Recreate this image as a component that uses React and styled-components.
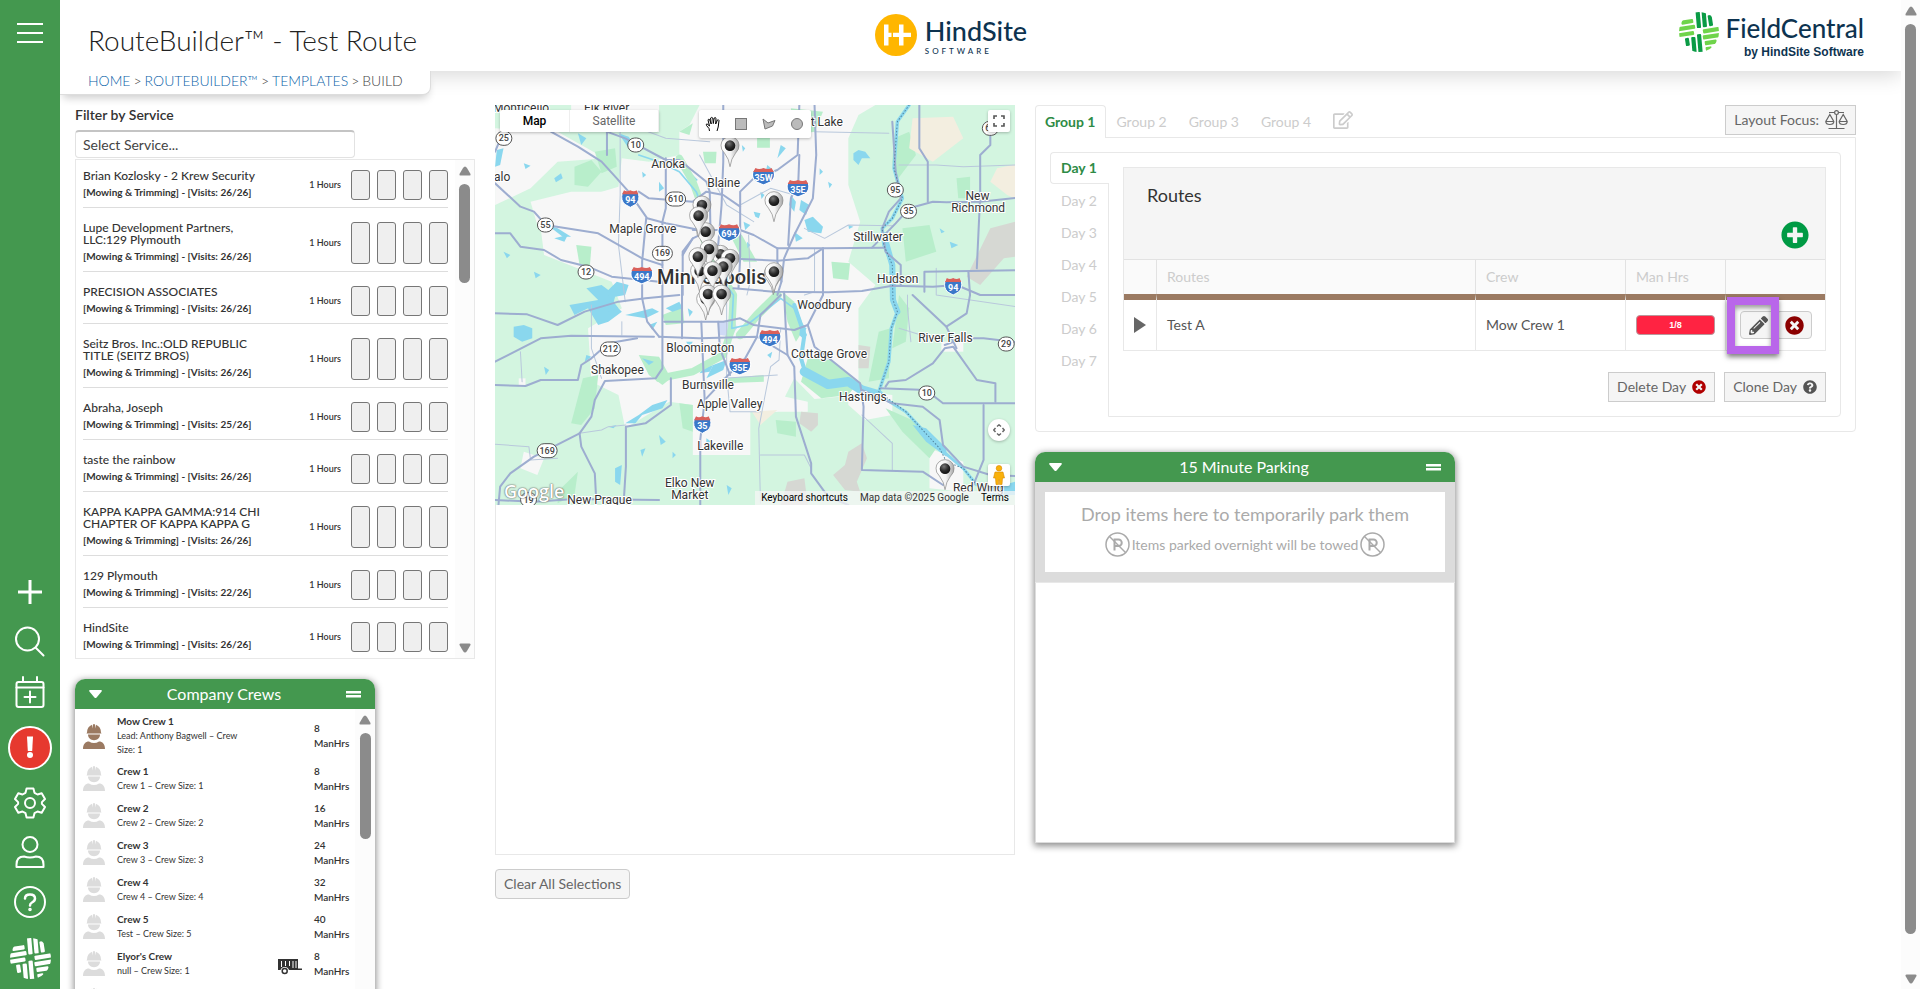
import React from "react";
import styled, { createGlobalStyle, css } from "styled-components";
import {
  FaPencilAlt,
  FaTimesCircle,
  FaQuestionCircle,
  FaPlusCircle,
  FaRegEdit,
} from "react-icons/fa";

const GREEN = "#44984f";
const BROWN = "#9b7a62";
const LINE = "#e8e8e8";

const GlobalStyle = createGlobalStyle`
  * { box-sizing: border-box; }
  body {
    margin: 0;
    background: #fff;
    color: #333;
    font: 400 14px/20px Lato, "Open Sans", sans-serif;
  }
  button, input { font: inherit; color: inherit; }
  button { cursor: pointer; }
  h1, h2, p, ul { margin: 0; padding: 0; font-weight: inherit; }
  ul { list-style: none; }
  svg { display: block; }
`;

/* ---------- page frame ---------- */

const Page = styled.div`
  display: flex;
  height: 100vh;
  overflow: hidden;
`;

const Sidebar = styled.nav`
  display: flex;
  flex-direction: column;
  flex: none;
  width: 60px;
  background: ${GREEN};
  color: #fff;
`;

const SideButton = styled.button`
  display: grid;
  place-items: center;
  flex: none;
  width: 60px;
  height: ${(p) => p.$height || 50}px;
  padding: 0;
  border: 0;
  background: none;
  ${(p) => p.$pushDown && css`margin-top: auto;`}
`;

const Main = styled.main`
  flex: 1;
  min-width: 0;
  overflow: hidden;
`;

const ScrollTrack = styled.div`
  display: flex;
  flex-direction: column;
  align-items: center;
  flex: none;
  width: ${(p) => p.$width}px;
  padding: 6px 0 5px;
  background: #fcfcfc;
`;

const ScrollThumb = styled.div`
  width: 11px;
  margin: 8px 0;
  border-radius: 6px;
  background: #8b8b8b;
  ${(p) => (p.$length ? css`height: ${p.$length}px;` : css`flex: 1; margin-bottom: 40px;`)}
`;

const ScrollArrow = styled.svg`
  flex: none;
  width: 12px;
  height: 10px;
  fill: #8b8b8b;
  ${(p) => p.$down && css`margin-top: auto; transform: rotate(180deg);`}
`;

function ScrollBar({ width = 19, length }) {
  return (
    <ScrollTrack $width={width} aria-hidden="true">
      <ScrollArrow viewBox="0 0 12 10"><path d="M6 0.5Q7 .5 8 2L11.5 8Q12 9.500 10.500 9.500H1.500Q0 9.500 .5 8L4 2Q5 .5 6 .5Z" /></ScrollArrow>
      <ScrollThumb $length={length} />
      <ScrollArrow $down viewBox="0 0 12 10"><path d="M6 0.5Q7 .5 8 2L11.5 8Q12 9.500 10.500 9.500H1.500Q0 9.500 .5 8L4 2Q5 .5 6 .5Z" /></ScrollArrow>
    </ScrollTrack>
  );
}

/* ---------- header ---------- */

const Header = styled.header`
  display: grid;
  grid-template-columns: 1fr auto 1fr;
  height: 71px;
  padding: 0 37px 0 28px;
  box-shadow: 0 4px 20px rgba(0, 0, 0, 0.16);
`;

const Title = styled.h1`
  padding-top: 23px;
  font-size: 28px;
  font-weight: 300;
  line-height: 34px;
  color: #222;
  white-space: nowrap;
`;

const HindSiteLogo = styled.div`
  display: flex;
  gap: 8px;
  margin: 14px 50px 0 0;
  color: #0d3350;
`;

const WordMark = styled.div`
  display: flex;
  flex-direction: column;
  font-size: ${(p) => p.$size}px;
  font-weight: 500;
  line-height: ${(p) => p.$line}px;
`;

const LogoSmall = styled.span`
  font-size: 8px;
  font-weight: 500;
  letter-spacing: 3px;
  line-height: 8px;
`;

const FieldLogo = styled.div`
  display: flex;
  justify-content: flex-end;
  gap: 7px;
  padding-top: 12px;
  color: #0d3350;
`;

const ByLine = styled.span`
  font: 700 12px/14px "Liberation Sans", Arial, sans-serif;
  text-align: right;
`;

const Crumbs = styled.nav`
  position: relative;
  display: flex;
  gap: 3px;
  width: 371px;
  max-width: 100%;
  height: 24px;
  padding-left: 28px;
  border: solid #ddd;
  border-width: 0 1px 1px 0;
  border-radius: 0 0 8px 0;
  background: #fff;
  box-shadow: 0 6px 8px -3px rgba(0, 0, 0, 0.2);
  color: #444;
  font-weight: 300;
  white-space: nowrap;
`;

const CrumbLink = styled.a`
  color: #0a5fa8;
  text-decoration: none;
`;

const Content = styled.div`
  display: grid;
  grid-template-columns: minmax(0, 400fr) minmax(0, 520fr) minmax(0, 821fr);
  gap: 20px;
  align-items: start;
  padding: 10px 45px 0 15px;
`;

/* ---------- service list ---------- */

const FilterLabel = styled.label`
  display: block;
  height: 25px;
  font-weight: 600;
`;

const FilterInput = styled.input`
  display: block;
  width: 70%;
  height: 28px;
  padding: 0 7px;
  border: 1px solid #e2e2e2;
  border-top: 2px solid #c4c4c4;
  border-radius: 4px;
  outline: 0;
  &::placeholder { color: #444; opacity: 1; }
`;

const ListPanel = styled.section`
  display: flex;
  height: 500px;
  margin-top: 1px;
  border: 1px solid ${LINE};
  overflow: hidden;
`;

const ServiceRows = styled.ul`
  flex: 1;
  min-width: 0;
  padding: 0 7px;
`;

const ServiceRow = styled.li`
  display: flex;
  align-items: stretch;
  padding: 14px 0 7px;
  border-bottom: 1px solid #ddd;
  &:first-child { padding-top: 10px; }
  &:last-child { border-bottom: 0; }
`;

const ServiceText = styled.div`
  flex: 1;
  min-width: 0;
`;

const ServiceName = styled.p`
  max-width: 185px;
  font-size: 12px;
  font-weight: 500;
  line-height: 12px;
`;

const ServiceDetail = styled.p`
  margin-top: 3px;
  font-size: 10px;
  font-weight: 700;
  line-height: 15px;
`;

const Hours = styled.span`
  align-self: center;
  margin-right: 10px;
  font-size: 9px;
  font-weight: 600;
`;

const WeekBoxes = styled.div`
  display: flex;
  gap: 7px;
`;

const WeekBox = styled.button`
  width: 19px;
  padding: 0;
  border: 1px solid #767676;
  border-radius: 3px;
  background: #efefef;
`;

const SERVICES = [
  ["Brian Kozlosky - 2 Krew Security", "26/26"],
  ["Lupe Development Partners, LLC:129 Plymouth", "26/26"],
  ["PRECISION ASSOCIATES", "26/26"],
  ["Seitz Bros. Inc.:OLD REPUBLIC TITLE (SEITZ BROS)", "26/26"],
  ["Abraha, Joseph", "25/26"],
  ["taste the rainbow", "26/26"],
  ["KAPPA KAPPA GAMMA:914 CHI CHAPTER OF KAPPA KAPPA G", "26/26"],
  ["129 Plymouth", "22/26"],
  ["HindSite", "26/26"],
];

/* ---------- floating panels ---------- */

const FloatPanel = styled.section`
  width: ${(p) => p.$width};
  margin-top: ${(p) => p.$top}px;
  border-radius: 10px 10px 0 0;
  background: #fff;
  box-shadow: 0 2px 7px 1px rgba(0, 0, 0, 0.45);
`;

const FloatHead = styled.header`
  display: flex;
  align-items: center;
  justify-content: space-between;
  height: 30px;
  padding: 0 14px;
  border-radius: 10px 10px 0 0;
  background: ${GREEN};
  color: #fff;
`;

const FloatTitle = styled.h2`
  font-size: 16px;
`;

const HeadButton = styled.button`
  padding: 0;
  border: 0;
  background: none;
`;

function PanelHead({ title }) {
  return (
    <FloatHead>
      <HeadButton aria-label={`Collapse ${title}`}>
        <svg width="13" height="9" viewBox="0 0 13 9" fill="#fff"><path d="M1 0H12Q13.500 .5 12.400 1.800L7.400 7.700Q6.500 8.500 5.600 7.700L.6 1.800Q-.5 .5 1 0Z" /></svg>
      </HeadButton>
      <FloatTitle>{title}</FloatTitle>
      <HeadButton aria-label={`Move ${title}`}>
        <svg width="15" height="7" viewBox="0 0 15 7" fill="#fff"><path d="M0 0H15V2.600H0ZM0 4H15V6.600H0Z" /></svg>
      </HeadButton>
    </FloatHead>
  );
}

const CrewBody = styled.div`
  display: flex;
  height: 340px;
`;

const CrewRows = styled.ul`
  flex: 1;
  min-width: 0;
  padding: 5px 0 0 8px;
`;

const CrewRow = styled.li`
  display: flex;
  min-height: 37px;
  padding-bottom: 7px;
  line-height: 15px;
`;

const CrewIconCell = styled.div`
  width: 34px;
  padding-top: 2px;
  flex: none;
  align-self: ${(p) => (p.$middle ? "center" : "start")};
`;

const CrewText = styled.div`
  width: 134px;
  font-size: 9px;
  line-height: 14px;
`;

const CrewName = styled.p`
  font-size: 10px;
  font-weight: 700;
  line-height: 15px;
`;

const CrewExtra = styled.div`
  display: flex;
  flex: 1;
  align-items: center;
  justify-content: flex-end;
  padding: 6px 12px 0 0;
`;

const CrewHours = styled.p`
  align-self: center;
  width: 41px;
  font-size: 10px;
  font-weight: 600;
`;

const CREWS = [
  ["Mow Crew 1", "Lead: Anthony Bagwell – Crew Size: 1", 8],
  ["Crew 1", "Crew 1 – Crew Size: 1", 8],
  ["Crew 2", "Crew 2 – Crew Size: 2", 16],
  ["Crew 3", "Crew 3 – Crew Size: 3", 24],
  ["Crew 4", "Crew 4 – Crew Size: 4", 32],
  ["Crew 5", "Test – Crew Size: 5", 40],
  ["Elyor's Crew", "null – Crew Size: 1", 8],
];

function WorkerIcon({ color = "#dcdcdc" }) {
  return (
    <svg width="22" height="25" viewBox="0 0 22 25" fill={color}>
      <path d="M4 8.500C4 4.500 6 2 9 .8L9.600 4.500L10 .3Q11 0 12 .3L12.400 4.500L13 .8C16 2 18 4.500 18 8.500L18.500 9.500H3.500Z" />
      <path d="M5 10.600H17C17 14 14.500 16.200 11 16.200S5 14 5 10.600Z" />
      <path d="M0 25C0 20 2.500 17.500 6 17.500Q11 20.500 16 17.500C19.500 17.500 22 20 22 25Z" />
    </svg>
  );
}

function TrailerIcon() {
  return (
    <svg width="24" height="16" viewBox="0 0 24 16" fill="#333">
      <path d="M0 0H20V9.500H24V11H11A4.500 4.500 0 0 0 2.500 11H0ZM3 2V8H4V2ZM7 2V7H8V2ZM11 2V7H12V2ZM14.500 2V9H15.500V2ZM17.500 2V9H18.500V2Z" fillRule="evenodd" />
      <circle cx="6.700" cy="12" r="2.500" fill="#fff" stroke="#333" strokeWidth="1.500" />
    </svg>
  );
}

/* ---------- map ---------- */

const MapFrame = styled.section`
  border: 1px solid ${LINE};
  border-top: 0;
  height: 750px;
  margin-bottom: 14px;
`;

const MapBox = styled.div`
  position: relative;
  margin: 0 -1px;
  overflow: hidden;
  font-family: Roboto, sans-serif;
`;

const MapDrawing = styled.svg`
  width: 100%;
  height: 400px;
  background: #d3f5e0;
`;

const overlay = css`
  position: absolute;
  display: flex;
  background: #fff;
  border-radius: 2px;
  box-shadow: 0 1px 3px rgba(0, 0, 0, 0.25);
`;

const MapTypes = styled.div`
  ${overlay}
  top: 5px;
  left: 5px;
`;

const MapType = styled.button`
  width: ${(p) => p.$width}px;
  height: 22px;
  padding: 0;
  border: 0;
  border-right: 1px solid #eee;
  background: none;
  color: ${(p) => (p.$active ? "#000" : "#666")};
  font-size: 12px;
  font-weight: ${(p) => (p.$active ? 500 : 400)};
`;

const DrawTools = styled.div`
  ${overlay}
  top: 5px;
  left: 204px;
`;

const MapButton = styled.button`
  display: grid;
  place-items: center;
  width: ${(p) => p.$size || 22}px;
  height: ${(p) => p.$size || 22}px;
  padding: 0;
  border: 0;
  background: none;
`;

const CornerTool = styled.div`
  ${overlay}
  top: ${(p) => p.$top}px;
  right: 5px;
  border-radius: ${(p) => (p.$round ? "50%" : "2px")};
`;

const MapCredits = styled.div`
  position: absolute;
  right: 0;
  bottom: 0;
  display: flex;
  gap: 12px;
  height: 14px;
  padding: 0 6px;
  background: rgba(245, 245, 245, 0.75);
  font-size: 10px;
  line-height: 14px;
`;

const CreditLink = styled.a`
  color: #000;
  text-decoration: none;
`;

const GoogleMark = styled.span`
  position: absolute;
  left: 9px;
  bottom: 3px;
  color: #fff;
  font: 600 18px/22px "Open Sans", sans-serif;
  text-shadow: 0 0 2px #666, 0 0 1px #555;
`;

const HIGHWAYS = [
  "180,110 260,155 330,200 375,250 410,290 465,370 520,385 620,405",
  "345,110 400,130 520,195 560,195 640,260 650,290 652,400",
  "440,290 470,310 600,320 640,290 690,300 740,335",
  "735,580 740,490 740,290 780,250 850,225 910,180 915,30",
  "915,180 912,260 890,310 882,450",
  "600,405 740,405 780,420 850,460 985,460 1165,458",
  "960,30 965,180 955,310 900,420 870,490 862,560 850,600",
  "690,30 690,200 685,330 675,450 672,560",
  "346,30 346,180",
  "520,190 520,340 510,380 510,820 490,850 340,858 310,915 300,965 265,1015 130,1085 60,1135 30,1175 25,1230",
  "462,370 450,500 450,610 465,680 500,725",
  "500,725 620,730 790,725 880,780",
  "515,680 690,680 740,670 780,690 900,705 940,690 985,600 985,460",
  "625,680 635,915 622,1035 622,1230",
  "860,600 800,660 790,725 755,790 705,840 640,910",
  "720,580 840,590 1000,592 1100,588 1190,572 1310,575 1380,570 1450,600 1590,600",
  "15,265 90,335 130,350 165,390 320,415 450,490 510,510",
  "15,415 60,415 90,455 160,465 210,495 290,515 360,545 500,560",
  "15,800 150,730 240,722 485,725",
  "15,870 105,873 150,855 260,855 270,810 300,790 350,745 435,730",
  "15,655 110,658 200,690 280,650 380,620 460,610 560,600",
  "265,1015 270,1055 310,1135 315,1230",
  "535,850 535,930 460,985 402,995 402,1115 395,1230",
  "870,590 875,700 880,780 900,815 905,965 950,1105 950,1135 1000,1205 1060,1230",
  "940,690 960,755 1095,865 1105,935 1100,1125 1280,1130 1340,1170",
  "1100,885 1190,925 1280,935 1330,975 1340,1050 1400,1115 1480,1140 1590,1145",
  "1155,880 1290,885 1340,925 1590,925",
  "1460,930 1460,1095 1430,1170",
  "1170,875 1180,860 1230,855 1310,805 1345,760 1370,755 1440,855 1495,865 1495,920",
  "1250,600 1350,695 1380,760",
  "1350,695 1410,655 1420,600 1415,530",
  "1345,750 1400,730 1460,730 1590,745",
  "1270,30 1270,160 1295,200 1295,320",
  "1130,458 1200,385 1240,340 1310,320 1350,322 1450,320 1590,305",
  "1480,60 1480,150 1450,180 1450,300 1440,520",
  "1190,80 1200,230 1215,310 1180,350 1160,400 1170,470 1215,510 1215,572",
  "568,560 568,730",
  "570,480 600,430 650,405 740,405",
  "570,600 570,470 600,430",
  "740,492 850,497 940,490 985,460",
  "850,460 850,500 862,560",
  "675,680 680,760 710,840",
  "15,170 40,110 90,30",
  "1285,590 1285,530 1590,525",
  "15,1215 130,1220 250,1212 500,1215",
];

const LOCAL_ROADS = [
  "385,70 385,300 380,450 400,620", "440,100 520,130 650,140", "960,110 1180,115",
  "15,1048 115,1055 120,1095 200,1090", "300,630 300,760 330,850", "265,1015 330,1005 350,995 402,990",
  "800,1225 795,1000 830,815 855,795 860,700", "800,1080 930,1080 950,1120", "700,540 700,840 710,950 800,950",
  "960,460 960,590 930,600", "930,400 990,430 1060,390 1190,392", "1210,210 1320,210 1400,215 1553,210",
  "1235,600 1235,640 1245,740", "1100,960 1190,1045 1190,1125", "765,420 770,560 760,600",
  "1320,520 1320,600 1590,640", "1210,700 1340,740", "95,860 90,770", "620,180 700,330 780,380",
  "390,680 390,720", "740,330 830,280 900,300", "690,850 850,840",
];

const URBAN = [
  "620,30 1140,30 1090,60 1060,130 1060,270 1095,380 1060,500 1140,570 1090,640 1090,900 960,912 900,850 850,950 770,950 770,1080 600,1080 600,930 530,920 400,1000 380,900 300,860 290,700 390,640 360,560 160,480 150,400 200,330 380,275 390,190 470,200 560,180 560,110 590,90",
  "15,100 200,110 340,190 200,200 120,280 15,330",
  "240,30 500,30 500,70 350,100 240,90", "1060,885 1190,900 1190,960 1110,975 1060,930",
  "1300,1060 1400,1100 1400,1190 1300,1180", "100,1070 160,1090 140,1140 90,1120", "85,850 105,850 105,875 85,875",
  "1335,740 1400,740 1400,770 1335,770", "120,320 240,290 370,290 300,400 140,390", "830,950 940,950 940,920 850,900",
];

const FOREST = [
  "250,215 300,195 330,230 290,275 250,270", "310,170 370,160 375,215 330,235", "630,170 670,170 668,205 635,205",
  "790,120 828,125 828,158 790,158", "560,110 600,85 590,120", "890,40 985,50 960,110 900,120", "700,400 745,420 790,500 750,500",
  "255,450 300,455 295,520 265,510", "510,660 570,635 575,685 520,690", "275,850 320,840 310,940 270,990 240,985",
  "440,780 500,785 535,850 510,870 470,840", "560,925 600,930 600,1010 570,1000", "845,975 905,980 905,1025 850,1015",
  "1010,500 1065,505 1060,555 1015,550", "1195,130 1240,110 1260,180 1200,260 1190,200", "1220,400 1300,390 1320,470 1230,500",
  "1210,600 1240,640 1230,740 1190,760", "1170,940 1260,980 1320,1060 1300,1090 1220,1010", "940,790 1010,795 1090,860 1060,900 980,910 920,860",
  "1150,710 1185,700 1180,850 1120,860", "1380,250 1420,245 1420,310 1385,310", "690,850 810,840 810,860 690,865", "200,1190 260,1130 250,1200 200,1225",
  "865,590 900,620 930,700 905,740 880,680",
];

const SAND = ["1250,70 1370,65 1400,130 1310,200 1240,160", "1500,220 1590,200 1590,330 1530,300 1480,260", "775,950 850,945 800,990"];
const ROCK = ["1480,400 1590,370 1590,480 1520,490 1450,570 1410,545", "1090,750 1125,755 1120,820 1090,820", "920,950 970,955 970,990 950,1010 915,985", "1060,1070 1100,1045 1115,1090 1085,1160 1095,1190 1050,1185 1015,1140 1050,1110", "880,1160 930,1150 940,1230 860,1230"];

const LAKES = [
  "285,580 330,570 350,585 375,560 410,570 400,600 370,605 365,625 390,650 350,680 320,690 290,640 250,660 235,630 320,615",
  "70,695 100,690 125,700 125,730 95,740 70,725", "930,375 955,365 985,395 980,415 940,410", "1075,175 1090,165 1110,170 1125,190 1100,190 1090,210 1075,195",
  "920,680 935,700 930,735 915,720", "170,390 200,400 240,425 215,425", "380,115 410,125 440,165 410,160", "20,165 40,160 30,210 15,215",
  "80,85 100,100 75,110", "260,115 285,130 270,150", "860,150 875,160 850,190", "890,300 905,320 900,350 885,330", "920,315 945,330 935,360 915,345",
  "780,350 800,355 795,370 785,365", "820,210 845,230 830,250 815,235", "750,380 770,390 755,405", "900,410 925,430 905,440",
  "480,930 525,915 510,940 450,960 430,985 400,985 440,960", "370,1120 390,1110 385,1170 370,1160", "630,820 660,810 650,830 620,835", "660,810 700,795 690,825 640,850",
  "400,660 440,650 480,640 500,650 460,670", "470,690 495,680 480,705", "350,600 380,640 350,650", "450,790 485,800 470,810", "285,780 300,785 280,800",
  "1250,990 1290,1000 1350,1060 1350,1085 1290,1040", "1450,1170 1500,1175 1590,1150 1590,1200 1480,1200", "1330,400 1345,410 1335,415", "1060,390 1075,395 1062,402",
  "160,815 175,825 165,840", "500,1020 520,1040 505,1050", "445,1065 460,1060 450,1085", "375,990 365,1000 350,995", "540,1070 550,1080 540,1090",
  "820,780 835,770 830,790", "580,740 600,740 590,755", "640,1030 655,1040 640,1045", "700,1170 715,1180 705,1200", "190,430 230,420 220,440",
  "520,640 560,620 570,640 540,650", "700,470 715,480 705,490", "585,640 600,650 590,665", "975,220 985,230 975,240", "760,440 770,450 762,460",
  "1360,440 1385,450 1365,460", "130,530 150,540 135,550", "40,470 60,480 50,490", "1000,80 1020,85 1015,95", "745,150 755,160 748,170",
  "190,250 210,235 215,250 195,262", "500,260 515,280 500,290", "100,205 120,212 105,222", "600,240 615,255 602,262", "800,290 812,300 803,312", "1000,260 1012,268 1004,280", "450,230 462,240 452,248",
];

const LABELS = [
  ["Monticello", 92, 50], ["Elk River", 345, 52], ["Anoka", 527, 220], ["Blaine", 691, 277], ["alo", 36, 259], ["Maple Grove", 452, 415],
  ["Forest Lake", 952, 94], ["New", 1442, 315], ["Richmond", 1444, 351], ["Stillwater", 1148, 438], ["Hudson", 1206, 564],
  ["Woodbury", 989, 642], ["River Falls", 1347, 741], ["Bloomington", 622, 772], ["Cottage Grove", 1003, 789], ["Shakopee", 377, 838],
  ["Burnsville", 645, 882], ["Apple Valley", 709, 939], ["Hastings", 1103, 919], ["Lakeville", 681, 1065], ["Elko New", 591, 1176],
  ["Market", 591, 1212], ["New Prague", 324, 1227], ["Red Wing", 1444, 1191],
];

const INTERSTATES = [["94", 415, 310], ["35W", 809, 243], ["35E", 911, 279], ["694", 707, 412], ["494", 449, 540], ["94", 1370, 573], ["494", 828, 729], ["35E", 739, 813], ["35", 628, 988]];
const ROUTES = [["25", 41, 130], ["10", 431, 150], ["610", 549, 312], ["55", 164, 390], ["169", 510, 475], ["12", 284, 531], ["95", 1199, 285], ["35", 1238, 349], ["65", 1480, 100], ["212", 356, 762], ["29", 1527, 747], ["10", 1292, 894], ["169", 169, 1067], ["19", 114, 1214]];
const PINS = [[710, 152], [840, 317], [627, 330], [638, 410], [617, 362], [682, 478], [648, 462], [710, 490], [620, 528], [615, 485], [690, 515], [658, 527], [838, 536], [840, 530], [638, 612], [645, 597], [685, 597], [1346, 1121]];

const mx = (x) => x / 2.958 - 5;
const my = (y) => y / 3 - 10;

function Interstate({ n, x, y }) {
  return (
    <g transform={`translate(${mx(x)} ${my(y)})`}>
      <path d="M-7-7Q-4-5 0-7Q4-5 7-7L9-5Q11 2 6 6Q2 8 0 9Q-2 8-6 6Q-11 2-9-5Z" transform={n.length > 2 ? "scale(1.15 1)" : "scale(.9 1)"} fill="#3b78c9" stroke="#fff" strokeWidth="1" />
      <path d="M-7-8Q-4-6 0-8Q4-6 7-8L9-4H-9Z" transform={n.length > 2 ? "scale(1.15 1)" : "scale(.9 1)"} fill="#d9605b" />
      <text y="5" textAnchor="middle" fontSize="9" fontWeight="700" fill="#fff">{n}</text>
    </g>
  );
}

function RouteShield({ n, x, y }) {
  const w = n.length > 2 ? 20 : 16;
  return (
    <g transform={`translate(${mx(x)} ${my(y)})`}>
      <rect x={-w / 2} y="-7" width={w} height="14" rx="7" fill="#fff" stroke="#555" strokeWidth="1" />
      <text y="3" textAnchor="middle" fontSize="9" fontWeight="500" fill="#444">{n}</text>
    </g>
  );
}

function Pin({ x, y }) {
  return (
    <g transform={`translate(${mx(x)} ${my(y)})`}>
      <path d="M0 21Q-1 13-5.500 7.500Q-9.500 3.500-9-.5A9 8.500 0 0 1 9-.5Q9.500 3.500 5.500 7.500Q1 13 0 21Z" fill="url(#pinBody)" stroke="#888" strokeWidth=".7" />
      <circle r="5.300" fill="url(#pinBall)" />
    </g>
  );
}

function RegionMap() {
  return (
    <MapDrawing viewBox="0 0 520 400" preserveAspectRatio="xMidYMid slice" role="img" aria-label="Map of customer sites around Minneapolis">
      <defs>
        <linearGradient id="pinBody"><stop offset="0" stopColor="#fff" /><stop offset=".55" stopColor="#f4f4f4" /><stop offset="1" stopColor="#a5a5a5" /></linearGradient>
        <radialGradient id="pinBall" cx=".4" cy=".3" r=".7"><stop offset="0" stopColor="#777" /><stop offset=".6" stopColor="#2a2a2a" /><stop offset="1" stopColor="#111" /></radialGradient>
      </defs>
      <g transform="translate(-5 -10) scale(.33806 .33333)" strokeLinejoin="round" strokeLinecap="round">
        {URBAN.map((p) => <polygon key={p} points={p} fill="#f7f7f7" />)}
        {FOREST.map((p) => <polygon key={p} points={p} fill="#b8eecb" />)}
        {SAND.map((p) => <polygon key={p} points={p} fill="#f3eee0" />)}
        {ROCK.map((p) => <polygon key={p} points={p} fill="#d6d8d3" />)}
        <polygon points="675,680 725,675 730,700 715,725 680,720" fill="#cfdaf5" />
        {LAKES.map((p) => <polygon key={p} points={p} fill="#8ad7ee" />)}
        <g fill="none">
          <path d="M560,190 600,260 625,330 620,400 660,500 720,600 715,700 690,780 600,830 500,850" stroke="#b8eecb" strokeWidth="22" />
          <path d="M850,600 790,660 740,720" stroke="#b8eecb" strokeWidth="26" />
          <path d="M440,180 500,200 560,230 610,290 625,330 620,400 650,500 720,600 715,700 760,690 860,610 900,640 935,720" stroke="#8ad7ee" strokeWidth="5" />
          <path d="M1240,30 1205,80 1195,220 1220,310 1190,370 1160,400 1165,450 1190,510 1192,615 1205,650 1187,700 1180,800 1150,890" stroke="#8ad7ee" strokeWidth="10" />
          <path d="M1165,420 1190,510 1192,615 1205,650" stroke="#8ad7ee" strokeWidth="18" />
          <path d="M900,630 930,720 920,790 935,840" stroke="#8ad7ee" strokeWidth="12" />
          <path d="M930,830 1000,868 1060,860 1100,885 1150,900" stroke="#8ad7ee" strokeWidth="28" />
          <path d="M1150,900 1230,950 1330,1060 1400,1120 1440,1170 1590,1190" stroke="#8ad7ee" strokeWidth="9" />
          {LOCAL_ROADS.map((p) => <polyline key={p} points={p} stroke="#b9c8dc" strokeWidth="3" />)}
          {HIGHWAYS.map((p) => <polyline key={p} points={p} stroke="#9dadd0" strokeWidth="6" />)}
          <path d="M1240,30 1205,80 1195,220 1220,310 1190,370 1160,400 1165,450 1190,510 1192,615 1205,650 1187,700 1180,800 1150,890 1230,950 1330,1060 1350,1100 1400,1120 1440,1170" stroke="#4d7f99" strokeWidth="3" strokeDasharray="2 8" />
        </g>
      </g>
      <g fontSize="12" fill="#333" stroke="#fff" strokeWidth="2" paintOrder="stroke" textAnchor="middle">
        {LABELS.map(([t, x, y]) => <text key={t} x={mx(x)} y={my(y)}>{t}</text>)}
        <text x={mx(656)} y={my(567)} fontSize="20" fontWeight="500">Minneapolis</text>
      </g>
      {ROUTES.map(([n, x, y]) => <RouteShield key={n + x} n={n} x={x} y={y} />)}
      {INTERSTATES.map(([n, x, y]) => <Interstate key={n + x} n={n} x={x} y={y} />)}
      {PINS.map(([x, y]) => <Pin key={`${x}-${y}`} x={x} y={y} />)}
    </MapDrawing>
  );
}

/* ---------- routes ---------- */

const TabsRow = styled.div`
  display: flex;
  align-items: flex-start;
  height: 33px;
`;

const GroupTab = styled.button`
  position: relative;
  height: 33px;
  padding: 0 10px;
  border: 1px solid transparent;
  border-bottom: 0;
  border-radius: 4px 4px 0 0;
  background: none;
  color: #ccc;
  ${(p) => p.$active && css`
    border-color: ${LINE};
    background: #fff;
    color: #2e8b46;
    font-weight: 700;
    padding: 0 9px;
  `}
`;

const GroupPanel = styled.section`
  display: flex;
  margin-top: -1px;
  padding: 14px;
  border: 1px solid ${LINE};
  border-radius: 0 0 4px 4px;
`;

const DayTabs = styled.div`
  position: relative;
  display: flex;
  flex-direction: column;
  flex: none;
  width: 59px;
  margin-right: -1px;
`;

const DayTab = styled.button`
  height: 32px;
  padding: 0 0 0 10px;
  border: 1px solid transparent;
  border-right: 0;
  border-radius: 4px 0 0 4px;
  background: none;
  color: #ccc;
  text-align: left;
  ${(p) => p.$active && css`
    margin-bottom: 1px;
    border-color: ${LINE};
    background: #fff;
    color: #2e8b46;
    font-weight: 700;
  `}
`;

const DayPanel = styled.div`
  flex: 1;
  min-width: 0;
  padding: 14px;
  border: 1px solid ${LINE};
  border-radius: 0 4px 4px 0;
`;

const RoutesCard = styled.div`
  border: 1px solid ${LINE};
`;

const RoutesHead = styled.div`
  display: flex;
  justify-content: space-between;
  height: 91px;
  padding: 17px 16px 10px 23px;
  background: #f5f5f5;
`;

const RoutesTitle = styled.h2`
  font-size: 18px;
`;

const AddButton = styled.button`
  align-self: flex-end;
  padding: 0;
  border: 0;
  background: none;
  color: #009a44;
  font-size: 28px;
`;

const RoutesTable = styled.table`
  width: 100%;
  border-collapse: separate;
  border-spacing: 0;
  table-layout: fixed;
`;

const HeadCell = styled.th`
  width: ${(p) => p.$width};
  height: 35px;
  padding: 0 10px;
  border-top: 1px solid #e2e2e2;
  border-right: 1px solid #e2e2e2;
  background: #fafafa;
  color: #ccc;
  font-weight: 400;
  text-align: left;
  &:last-child { border-right: 0; }
`;

const Cell = styled.td`
  position: relative;
  height: 56px;
  padding: 0 ${(p) => (p.$tight ? 0 : 10)}px;
  border-top: 6px solid ${BROWN};
  border-right: 1px solid ${LINE};
  color: #555;
  &:last-child { border-right: 0; }
`;

const ExpandButton = styled.button`
  display: block;
  margin-left: 10px;
  padding: 0;
  border: 0;
  background: none;
`;

const HoursBadge = styled.span`
  display: block;
  height: 20px;
  border: 1px solid #b9979b;
  border-radius: 4px;
  background: #ff2342;
  color: #fff;
  font: 700 9px/18px "Liberation Sans", Arial, sans-serif;
  text-align: center;
`;

const RowActions = styled.div`
  display: flex;
  padding-left: 14px;
`;

const RowAction = styled.button`
  display: grid;
  place-items: center;
  width: 36px;
  height: 28px;
  padding: 0;
  border: 1px solid #ccc;
  border-radius: 4px;
  background: #f5f5f5;
  color: ${(p) => p.$color};
  font-size: 19px;
`;

const Highlight = styled.div`
  position: absolute;
  top: -3px;
  left: 1px;
  width: 52px;
  height: 57px;
  border: 8px solid #b966ea;
  box-shadow: 0 3px 5px rgba(0, 0, 0, 0.5), inset 0 3px 5px rgba(0, 0, 0, 0.4);
  pointer-events: none;
`;

const GrayButton = styled.button`
  display: flex;
  align-items: center;
  gap: 6px;
  height: ${(p) => p.$height || 30}px;
  padding: 0 8px;
  border: 1px solid #ccc;
  border-radius: ${(p) => p.$radius || 0}px;
  background: #f5f5f5;
  color: #666;
  white-space: nowrap;
  ${(p) => p.$pushRight && css`margin-left: auto; padding: 0 7px 0 8px;`}
`;

const DayActions = styled.div`
  display: flex;
  justify-content: flex-end;
  gap: 9px;
  margin-top: 21px;
`;

const EditTabs = styled.button`
  margin-left: 11px;
  padding: 5px 0 0;
  border: 0;
  background: none;
  color: #ccc;
`;

const ParkingBody = styled.div`
  height: 361px;
  border: solid #ddd;
  border-width: 0 1px 1px;
`;

const DropFrame = styled.div`
  margin: 0 -1px;
  padding: 10px;
  border-bottom: 1px solid ${LINE};
  background: #dcdcdc;
`;

const DropZone = styled.div`
  display: flex;
  flex-direction: column;
  align-items: center;
  height: 80px;
  padding-top: 10px;
  background: #fff;
  color: #aaa;
`;

const DropTitle = styled.p`
  font-size: 18px;
  line-height: 24px;
`;

const DropNote = styled.p`
  display: flex;
  align-items: center;
  gap: 2px;
  margin-top: 6px;
`;

function NoParking() {
  return (
    <svg width="25" height="25" viewBox="0 0 25 25" fill="none" stroke="#aaa" strokeWidth="1.500">
      <circle cx="12.500" cy="12.500" r="11.500" />
      <path d="M9.500 18.500V7.500H13.500A3.200 3.200 0 0 1 13.500 14H9.500" strokeWidth="2" />
      <path d="M4.500 4.500L20.500 20.500" />
    </svg>
  );
}

function BalanceIcon() {
  return (
    <svg width="23" height="20" viewBox="0 0 23 20" fill="none" stroke="#666" strokeWidth="1.200">
      <path d="M4 2.500H9.500M13.500 2.500H19M11.500 4.500V18.500M3.500 18.500H19.500" />
      <circle cx="11.500" cy="2.600" r="1.900" />
      <path d="M4.800 4.500L.8 11.500A4 3 0 0 0 8.800 11.500ZM.8 11.500H8.800M18.200 4.500L14.200 11.500A4 3 0 0 0 22.200 11.500ZM14.200 11.500H22.200" />
    </svg>
  );
}

function WeaveIcon({ light, dark, size = 40 }) {
  return (
    <svg width={size} height={size} viewBox="0 0 40 40">
      <clipPath id={`weave${size}`}><circle cx="20" cy="20" r="20" /></clipPath>
      <g clipPath={`url(#weave${size})`}>
        <g transform="rotate(-9 20 20)">
          <g fill={light}>
            <rect x="4" y="6" width="12" height="4.200" rx="1" />
            <rect x="-1" y="12" width="18" height="4.200" rx="1" />
            <rect x="-1" y="18" width="16" height="4" rx="1" />
            <rect x="24" y="18" width="18" height="4.200" rx="1" />
            <rect x="23" y="24" width="18" height="4.200" rx="1" />
            <rect x="24" y="30" width="12" height="4.200" rx="1" />
            <rect x="24" y="36" width="6" height="4" rx="1" />
          </g>
          <g fill={dark}>
            <rect x="19" y="-1" width="4.200" height="17" rx="1" transform="rotate(4 20 10)" />
            <rect x="25" y="-1" width="4.200" height="17" rx="1" transform="rotate(4 26 10)" />
            <rect x="31" y="5" width="4" height="11" rx="1" />
            <rect x="5" y="24" width="4" height="8" rx="1" />
            <rect x="11" y="24" width="4.200" height="18" rx="1" transform="rotate(4 13 30)" />
            <rect x="17" y="22" width="4.200" height="19" rx="1" transform="rotate(4 18 30)" />
          </g>
        </g>
      </g>
    </svg>
  );
}

const Stroke = ({ size = 32, width = 2, children }) => (
  <svg width={size} height={size} viewBox="0 0 32 32" fill="none" stroke="#fff" strokeWidth={width} strokeLinecap="round" strokeLinejoin="round">{children}</svg>
);

function SideNav() {
  return (
    <Sidebar aria-label="Main">
      <SideButton $height={66} aria-label="Menu"><svg width="26" height="22" viewBox="0 0 26 22" fill="none" stroke="#fff" strokeWidth="2"><path d="M0 2H26M0 11H26M0 20H26" /></svg></SideButton>
      <SideButton $pushDown aria-label="Add"><svg width="26" height="26" viewBox="0 0 26 26" fill="none" stroke="#fff" strokeWidth="3"><path d="M1 13H25M13 1V25" /></svg></SideButton>
      <SideButton aria-label="Search"><Stroke><circle cx="13.500" cy="13" r="11.500" /><path d="M22 22L29.500 29.500" /></Stroke></SideButton>
      <SideButton aria-label="Schedule"><Stroke><rect x="2.500" y="6" width="27" height="25" rx="2" /><path d="M2.500 11.500H29.500M9 1V6M23 1V6M16 15.500V26.500M10.500 21H21.500" /></Stroke></SideButton>
      <SideButton $height={62} aria-label="Alerts">
        <svg width="44" height="44" viewBox="0 0 44 44"><circle cx="22" cy="22" r="21" fill="#e6392f" stroke="#fff" strokeWidth="2" /><path d="M19 10.500H25L24.200 25H19.800Z" fill="#fff" /><circle cx="22" cy="29" r="3" fill="#fff" /></svg>
      </SideButton>
      <SideButton $height={48} aria-label="Settings">
        <Stroke><path d="M12.600 1.500H19.400L20.500 5.800L23.500 7.500L27.700 6.200L31 12L27.900 15.100V16.900L31 20L27.700 25.800L23.500 24.500L20.500 26.200L19.400 30.500H12.600L11.500 26.200L8.500 24.500L4.300 25.800L1 20L4.100 16.900V15.100L1 12L4.300 6.200L8.500 7.500L11.500 5.800Z" /><circle cx="16" cy="16" r="5" /></Stroke>
      </SideButton>
      <SideButton aria-label="Account"><Stroke><circle cx="16" cy="8.500" r="7.500" /><path d="M2.500 31V28.500Q2.500 20.500 10 20.500Q16 22.500 22 20.500Q29.500 20.500 29.500 28.500V31Z" /></Stroke></SideButton>
      <SideButton aria-label="Help"><Stroke><circle cx="16" cy="16" r="15" /><path d="M11 12.500Q11 8.500 16 8.500T21 12.500Q21 15 18 16.500Q16 17.500 16 19.500" strokeWidth="2.500" /><circle cx="16" cy="23.500" r=".8" strokeWidth="2" /></Stroke></SideButton>
      <SideButton $height={62} aria-label="FieldCentral home"><WeaveIcon light="#fff" dark="#fff" size={41} /></SideButton>
    </Sidebar>
  );
}

function ServiceColumn() {
  return (
    <div>
      <FilterLabel htmlFor="service">Filter by Service</FilterLabel>
      <FilterInput id="service" placeholder="Select Service..." />
      <ListPanel>
        <ServiceRows>
          {SERVICES.map(([name, visits]) => (
            <ServiceRow key={name}>
              <ServiceText>
                <ServiceName>{name}</ServiceName>
                <ServiceDetail>[Mowing &amp; Trimming] - [Visits: {visits}]</ServiceDetail>
              </ServiceText>
              <Hours>1 Hours</Hours>
              <WeekBoxes>
                {[1, 2, 3, 4].map((w) => <WeekBox key={w} aria-label={`${name}, week ${w}`} />)}
              </WeekBoxes>
            </ServiceRow>
          ))}
        </ServiceRows>
        <ScrollBar width={19} length={99} />
      </ListPanel>
      <FloatPanel $width="75%" $top={20}>
        <PanelHead title="Company Crews" />
        <CrewBody>
          <CrewRows>
            {CREWS.map(([name, info, hours], i) => (
              <CrewRow key={name}>
                <CrewIconCell $middle={i === 0}><WorkerIcon color={i === 0 ? BROWN : undefined} /></CrewIconCell>
                <CrewText><CrewName>{name}</CrewName>{info}</CrewText>
                <CrewExtra>{name === "Elyor's Crew" && <TrailerIcon />}</CrewExtra>
                <CrewHours>{hours}<br />ManHrs</CrewHours>
              </CrewRow>
            ))}
            <CrewRow><CrewIconCell><WorkerIcon /></CrewIconCell></CrewRow>
          </CrewRows>
          <ScrollBar width={20} length={106} />
        </CrewBody>
      </FloatPanel>
    </div>
  );
}

function MapColumn() {
  return (
    <div>
      <MapFrame>
        <MapBox>
          <RegionMap />
          <MapTypes>
            <MapType $active $width={70}>Map</MapType>
            <MapType $width={89}>Satellite</MapType>
          </MapTypes>
          <DrawTools>
            <MapButton $size={28} aria-label="Pan">
              <svg width="16" height="16" viewBox="0 0 16 16" fill="#fff" stroke="#000" strokeWidth="1" strokeLinejoin="round"><path d="M4.500 15L4 12.500L1.500 9.500Q.8 8 2 7.800L4.500 10L3 4Q3.200 2.800 4.600 3.500L6.200 8L5.600 2Q6.500.8 7.800 2L8.300 7.500L9.200 2Q10.300 1 11 2.200L10.700 8L12.400 4Q13.600 3.300 14 4.500L13.200 11L12 15" /></svg>
            </MapButton>
            <MapButton $size={28} aria-label="Draw rectangle"><svg width="12" height="12"><rect x=".5" y=".5" width="11" height="11" fill="#bbb" stroke="#777" /></svg></MapButton>
            <MapButton $size={28} aria-label="Draw polygon"><svg width="14" height="12" viewBox="0 0 14 12"><path d="M1 1L6 5L13 2.500L10.500 8L3 11Z" fill="#bbb" stroke="#777" /></svg></MapButton>
            <MapButton $size={28} aria-label="Draw circle"><svg width="12" height="12"><circle cx="6" cy="6" r="5.500" fill="#bbb" stroke="#777" /></svg></MapButton>
          </DrawTools>
          <CornerTool $top={5}>
            <MapButton aria-label="Full screen"><svg width="12" height="12" viewBox="0 0 12 12" fill="none" stroke="#555" strokeWidth="1.600"><path d="M1 4V1H4M8 1H11V4M11 8V11H8M4 11H1V8" /></svg></MapButton>
          </CornerTool>
          <CornerTool $top={314} $round>
            <MapButton aria-label="Camera controls"><svg width="12" height="12" viewBox="0 0 12 12" fill="none" stroke="#666" strokeWidth="1.400"><path d="M4 2.500L6 .8L8 2.500M4 9.500L6 11.200L8 9.500M2.500 4L.8 6L2.500 8M9.500 4L11.200 6L9.500 8" /></svg></MapButton>
          </CornerTool>
          <CornerTool $top={359}>
            <MapButton aria-label="Street view"><svg width="12" height="20" viewBox="0 0 12 20" fill="#f9b10b" stroke="#d88a00" strokeWidth=".6"><circle cx="6" cy="3.300" r="2.800" /><path d="M2 7H10L11.500 13H9.500L9 19.500H6.500V15H5.500V19.500H3L2.500 13H.5Z" /></svg></MapButton>
          </CornerTool>
          <GoogleMark>Google</GoogleMark>
          <MapCredits>
            <CreditLink href="#keys">Keyboard shortcuts</CreditLink>
            <span>Map data ©2025 Google</span>
            <CreditLink href="#terms">Terms</CreditLink>
          </MapCredits>
        </MapBox>
      </MapFrame>
      <GrayButton $radius={4}>Clear All Selections</GrayButton>
    </div>
  );
}

function RoutesColumn() {
  return (
    <div>
      <TabsRow>
        <GroupTab $active>Group 1</GroupTab>
        <GroupTab>Group 2</GroupTab>
        <GroupTab>Group 3</GroupTab>
        <GroupTab>Group 4</GroupTab>
        <EditTabs aria-label="Edit groups"><FaRegEdit size={20} /></EditTabs>
        <GrayButton $pushRight>Layout Focus: <BalanceIcon /></GrayButton>
      </TabsRow>
      <GroupPanel>
        <DayTabs>
          {[1, 2, 3, 4, 5, 6, 7].map((d) => <DayTab key={d} $active={d === 1}>Day {d}</DayTab>)}
        </DayTabs>
        <DayPanel>
          <RoutesCard>
            <RoutesHead>
              <RoutesTitle>Routes</RoutesTitle>
              <AddButton aria-label="Add route"><FaPlusCircle /></AddButton>
            </RoutesHead>
            <RoutesTable>
              <thead>
                <tr>
                  <HeadCell $width="33px" aria-label="Expand" />
                  <HeadCell>Routes</HeadCell>
                  <HeadCell $width="150px">Crew</HeadCell>
                  <HeadCell $width="100px">Man Hrs</HeadCell>
                  <HeadCell $width="99px" aria-label="Actions" />
                </tr>
              </thead>
              <tbody>
                <tr>
                  <Cell $tight>
                    <ExpandButton aria-label="Expand Test A"><svg width="12" height="16" viewBox="0 0 12 16" fill="#666"><path d="M0 0L12 8L0 16Z" /></svg></ExpandButton>
                  </Cell>
                  <Cell>Test A</Cell>
                  <Cell>Mow Crew 1</Cell>
                  <Cell><HoursBadge>1/8</HoursBadge></Cell>
                  <Cell $tight>
                    <RowActions>
                      <RowAction $color="#555" aria-label="Edit route"><FaPencilAlt /></RowAction>
                      <RowAction $color="#8b0000" aria-label="Delete route"><FaTimesCircle /></RowAction>
                    </RowActions>
                    <Highlight />
                  </Cell>
                </tr>
              </tbody>
            </RoutesTable>
          </RoutesCard>
          <DayActions>
            <GrayButton>Delete Day <FaTimesCircle color="#b00000" /></GrayButton>
            <GrayButton>Clone Day <FaQuestionCircle color="#555" /></GrayButton>
          </DayActions>
        </DayPanel>
      </GroupPanel>
      <FloatPanel $width="420px" $top={20}>
        <PanelHead title="15 Minute Parking" />
        <ParkingBody>
          <DropFrame>
            <DropZone>
              <DropTitle>Drop items here to temporarily park them</DropTitle>
              <DropNote><NoParking />Items parked overnight will be towed<NoParking /></DropNote>
            </DropZone>
          </DropFrame>
        </ParkingBody>
      </FloatPanel>
    </div>
  );
}

export default function App() {
  return (
    <>
      <GlobalStyle />
      <Page>
        <SideNav />
        <Main>
          <Header>
            <Title>RouteBuilder™ - Test Route</Title>
            <HindSiteLogo>
              <svg width="42" height="42" viewBox="0 0 42 42"><circle cx="21" cy="21" r="21" fill="#ffb600" /><path d="M9 10.500H13.500V18.800H16.500V23H13.500V31.500H9ZM18 18.800H24V10.500H28.500V18.800H36V23H28.500V31.500H24V23H18Z" fill="#fff" /></svg>
              <WordMark $size={27} $line={33}>HindSite<LogoSmall>SOFTWARE</LogoSmall></WordMark>
            </HindSiteLogo>
            <FieldLogo>
              <WeaveIcon light="#6fd44b" dark="#0a9b45" />
              <WordMark $size={26} $line={33}>FieldCentral<ByLine>by HindSite Software</ByLine></WordMark>
            </FieldLogo>
          </Header>
          <Crumbs aria-label="Breadcrumb">
            <CrumbLink href="#home">HOME</CrumbLink> &gt;
            <CrumbLink href="#routebuilder">ROUTEBUILDER™</CrumbLink> &gt;
            <CrumbLink href="#templates">TEMPLATES</CrumbLink> &gt; <span>BUILD</span>
          </Crumbs>
          <Content>
            <ServiceColumn />
            <MapColumn />
            <RoutesColumn />
          </Content>
        </Main>
        <ScrollBar />
      </Page>
    </>
  );
}
